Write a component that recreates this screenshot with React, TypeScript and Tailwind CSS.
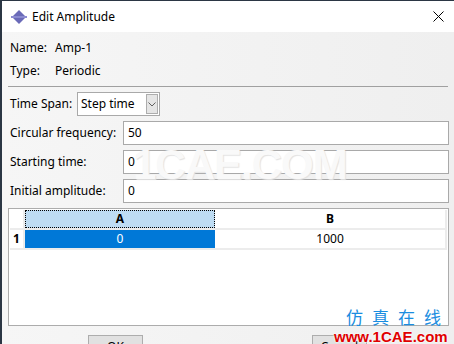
import React from "react";

const font = { fontFamily: '"Noto Sans", "Segoe UI", sans-serif' };

function TitleIcon() {
  return (
    <svg width="16" height="14" viewBox="0 0 16 14" className="shrink-0">
      <polygon points="8,0 14,6 2,6" fill="#6a6ab8" />
      <rect x="0" y="6" width="16" height="2" fill="#8a8ad0" />
      <polygon points="2,8 14,8 8,14" fill="#6a6ab8" />
    </svg>
  );
}

function Field({ label, value, top }: { label: string; value: string; top: number }) {
  return (
    <div className="flex items-center h-[24px]" style={{ marginTop: top }}>
      <div className="w-[115px] pl-[2px] text-[12px] text-black">{label}</div>
      <div className="flex-1 h-[24px] mr-[4px] bg-white border border-[#a9a9a9] flex items-center pl-[4px] text-[12px] text-black">
        {value}
      </div>
    </div>
  );
}

export default function App() {
  return (
    <div
      className="relative w-[454px] h-[344px] overflow-hidden bg-[#f0f0f0] border-l-2 border-t border-[#2b3644]"
      style={font}
    >
      {/* Title bar */}
      <div className="h-[31px] bg-white flex items-center pl-[9px] pr-[9px]">
        <TitleIcon />
        <span className="ml-[5px] text-[12px] text-black">Edit Amplitude</span>
        <div className="flex-1" />
        <svg width="11" height="11" viewBox="0 0 11 11" className="mr-[1px]">
          <path d="M0.5 0.5 L10.5 10.5 M10.5 0.5 L0.5 10.5" stroke="#000" strokeWidth="1" />
        </svg>
      </div>

      <div className="relative pl-[6px] pr-[1px] bg-gradient-to-r from-[#f6f6f6] to-[#efefef]">
        <div className="pt-[5px] h-[21px] flex items-center text-[12px] text-black">
          <span className="w-[47px] pl-[2px] mt-[5px]">Name:</span>
          <span className="mt-[5px]">Amp-1</span>
        </div>
        <div className="mt-[10px] h-[16px] flex items-center text-[12px] text-black">
          <span className="w-[47px] pl-[2px]">Type:</span>
          <span>Periodic</span>
        </div>
        <div className="mt-[7px] h-px bg-[#a0a0a0] mr-[5px] ml-[0px]" />

        <div className="mt-[5px] flex items-center h-[24px]">
          <div className="w-[69px] pl-[2px] text-[12px] text-black">Time Span:</div>
          <div className="w-[83px] h-[24px] bg-white border border-[#a9a9a9] flex items-center pl-[3px] pr-[1px] text-[12px] text-black">
            <span className="flex-1">Step time</span>
            <div className="w-[12px] h-[20px] bg-[#e5e5e5] border border-[#adadad] flex items-center justify-center">
              <svg width="8" height="5" viewBox="0 0 8 5">
                <path d="M0.5 0.5 L4 4 L7.5 0.5" stroke="#606060" fill="none" strokeWidth="1" />
              </svg>
            </div>
          </div>
        </div>

        <Field label="Circular frequency:" value="50" top={5} />
        <Field label="Starting time:" value="0" top={5} />
        <Field label="Initial amplitude:" value="0" top={5} />

        {/* Table */}
        <div className="mt-[5px] mr-[4px] h-[118px] bg-white border border-[#acacac] p-[1px]">
          <div className="flex h-[20px] border-b-2 border-[#ececec]">
            <div className="w-[15px] border-r-2 border-[#ececec]" />
            <div className="w-[191px] bg-[#bedcf3] border border-dotted border-black flex items-center justify-center text-[12px] font-bold text-black">
              A
            </div>
            <div className="w-[233px] border-r-2 border-[#ececec] flex items-center justify-center text-[12px] font-bold text-black">
              B
            </div>
          </div>
          <div className="flex h-[20px] border-b-2 border-[#ececec]">
            <div className="w-[15px] border-r-2 border-[#ececec] flex items-center justify-center text-[12px] font-bold text-black">
              1
            </div>
            <div className="w-[191px] bg-[#0078d7] flex items-center justify-center text-[12px] text-white">0</div>
            <div className="w-[233px] border-r-2 border-[#ececec] flex items-center justify-center text-[12px] text-black">
              1000
            </div>
          </div>
        </div>

        {/* Buttons */}
        <div className="mt-[9px] flex h-[24px]">
          <div className="ml-[80px] w-[55px] h-[24px] bg-[#e1e1e1] border border-[#adadad] flex items-center justify-center text-[12px] text-black">
            OK
          </div>
          <div className="ml-[169px] w-[55px] h-[24px] bg-[#e1e1e1] border border-[#adadad] flex items-center justify-center text-[12px] text-black">
            Cancel
          </div>
        </div>
      </div>

      {/* Watermarks */}
      <div
        className="absolute left-[131px] top-[143px] text-[42px] font-bold tracking-[-1px] text-[#f9f9f9] leading-none pointer-events-none"
        style={{ fontFamily: '"Liberation Sans", Arial, sans-serif', textShadow: "1px 1px 1px #e2e2e2" }}
      >
        1CAE.COM
      </div>
      <div
        className="absolute left-[344px] top-[307px] text-[17px] tracking-[9px] text-[#1a8de0] leading-none"
        style={{ fontFamily: '"Noto Sans CJK SC", sans-serif' }}
      >
        仿真在线
      </div>
      <div
        className="absolute left-[332px] top-[328px] text-[15px] font-bold text-[#e00000] leading-none"
        style={{ fontFamily: '"Liberation Sans", Arial, sans-serif', textShadow: "0 0 2px #fff, 0 0 2px #fff" }}
      >
        www.1CAE.com
      </div>
    </div>
  );
}
